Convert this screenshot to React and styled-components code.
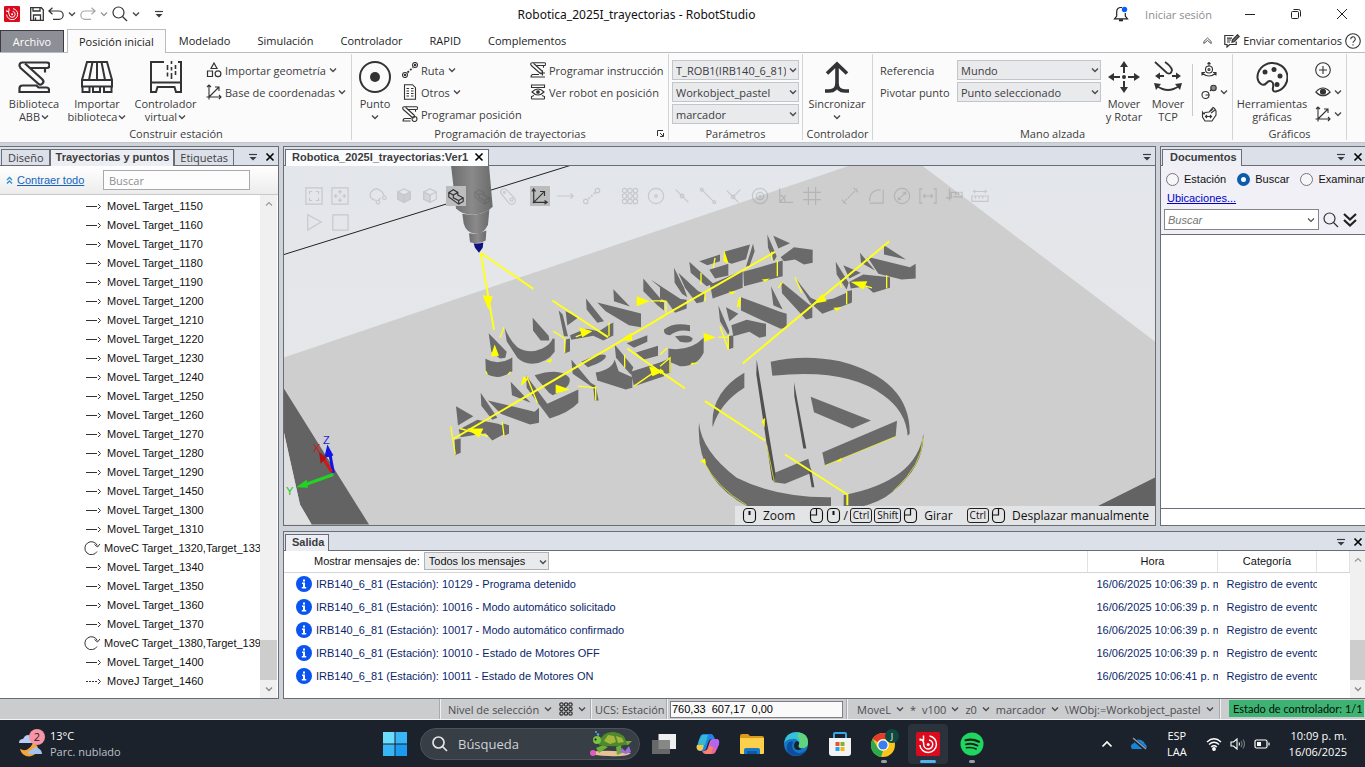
import React from "react";
import styled, { createGlobalStyle, css } from "styled-components";

const Global = createGlobalStyle`
  *, *::before, *::after { box-sizing: border-box; }
  html, body, #root { height: 100%; }
  body { margin: 0; overflow: hidden; font-family: "Open Sans", "Noto Sans", sans-serif; font-size: 11px; color: #3c3c40; background: #ced2d9; }
  button, input, select { font: inherit; color: inherit; margin: 0; }
  button { border: 0; background: none; padding: 0; cursor: default; }
  ul { list-style: none; margin: 0; padding: 0; }
  svg { display: block; flex: none; }
`;

const Shell = styled.div`
  display: flex;
  flex-direction: column;
  height: 100vh;
  min-height: 560px;
`;

/* ---------- icon helpers ---------- */
const Svg = ({ s = 16, w, h, vb, sw = 1.2, c = "#333336", fill = "none", children }) => (
  <svg aria-hidden="true" width={w || s} height={h || s} viewBox={vb || `0 0 ${w || s} ${h || s}`} fill={fill} stroke={c} strokeWidth={sw}>
    {children}
  </svg>
);
const Chevron = ({ c = "#4a4a4e", sw = 1.4 }) => (
  <Svg w={8} h={8} c={c} sw={sw}><path d="M1 2.5 4 5.5 7 2.5" /></Svg>
);
const CloseX = () => <Svg w={10} h={10} c="#000" sw={1.6}><path d="M1.5 1.5l7 7M8.5 1.5l-7 7" /></Svg>;
const DropBar = () => <Svg w={10} h={10} c="#3b3b42" sw={1.2}><path d="M1 2.5h8" /><path d="M1.500 5h7L5 8.500z" fill="#3b3b42" stroke="none" /></Svg>;
const AbbSwirl = ({ s = 16 }) => (
  <svg aria-hidden="true" width={s} height={s} viewBox="0 0 24 24" fill="none" stroke="#fff" strokeWidth="1.5">
    <rect width="24" height="24" rx="2" fill="#db0a1c" stroke="none" />
    <path d="M13.500 4a8.300 8.300 0 1 1-9.600 9" />
    <path d="M13 8a4.500 4.500 0 1 1-5.300 4.500q.3-4.500-4.200-5.500M7.500 3.500v4.500h-4" />
    <circle cx="12.200" cy="12.400" r="1.500" fill="#fff" stroke="none" />
  </svg>
);
const Magnifier = ({ s = 16, c = "#333336", sw = 1.2 }) => (
  <Svg s={s} vb="0 0 16 16" c={c} sw={sw}><circle cx="6.500" cy="6.500" r="5.500" /><path d="M10.500 10.500 15 15" /></Svg>
);

/* ---------- title bar ---------- */
const TitleBar = styled.header`
  display: grid;
  grid-template-columns: 1fr auto 1fr;
  align-items: center;
  flex: none;
  height: 28px;
  background: #fff;
`;
const QuickAccess = styled.div`
  display: flex;
  align-items: center;
  gap: 4px;
  padding-left: 4px;
  button:nth-child(1) { margin-right: 6px; }
  button:last-child { margin-left: 10px; }
`;
const WindowTitle = styled.h1`
  margin: 0;
  padding-right: 92px;
  font: 400 12px "Noto Sans", sans-serif;
  color: #111;
`;
const WindowTools = styled.div`
  display: flex;
  justify-content: flex-end;
  align-items: center;
  height: 27px;
  color: #8c8c90;
`;
const BellBtn = styled.button`margin-right: 16px;`;
const LoginBtn = styled.button`margin-right: 15px;`;
const WinBtn = styled.button`
  width: 46px;
  height: 27px;
  display: grid;
  place-items: center;
`;

function Title() {
  return (
    <TitleBar>
      <QuickAccess>
        <button aria-label="RobotStudio"><AbbSwirl /></button>
        <button aria-label="Guardar"><Svg s={14} sw={1.3}><path d="M.7.7h10.600l2 2v10.600H.7zM3 .7v3.300h7V.7M3.500 13.300V8h7v5.300M5.500 13V10.500" /></Svg></button>
        <button aria-label="Deshacer"><Svg w={16} h={14} sw={1.2}><path d="M4.500.8.9 4l3.600 3.200M1 4h10a4 4 0 0 1 0 8.300H5" /></Svg></button>
        <Chevron />
        <button aria-label="Rehacer"><Svg w={16} h={14} sw={1.2} c="#a6a6aa"><path d="M11.500.8 15.100 4l-3.600 3.200M15 4H5a4 4 0 0 0 0 8.300h6" /></Svg></button>
        <Chevron c="#9a9a9e" />
        <button aria-label="Zoom"><Magnifier /></button>
        <Chevron />
        <button aria-label="Personalizar"><DropBar /></button>
      </QuickAccess>
      <WindowTitle>Robotica_2025I_trayectorias - RobotStudio</WindowTitle>
      <WindowTools>
        <BellBtn aria-label="Notificaciones">
          <Svg s={16} sw={1.2} c="#222"><path d="M8 1.500c-3 0-4.300 2-4.300 4.500v4L1.500 12.800h13L12.300 10V7M8 1.500h1" /><path d="M6 14.300h4" strokeWidth="2" /><circle cx="11.500" cy="3.500" r="2.700" fill="#0b5cff" stroke="none" /></Svg>
        </BellBtn>
        <LoginBtn>Iniciar sesión</LoginBtn>
        <WinBtn aria-label="Minimizar"><Svg s={10} c="#222" sw={1}><path d="M0 5.500h10" /></Svg></WinBtn>
        <WinBtn aria-label="Restaurar"><Svg s={10} c="#222" sw={1}><rect x=".5" y="2.500" width="7" height="7" rx="1" /><path d="M2.500.5h5a2 2 0 0 1 2 2v5" /></Svg></WinBtn>
        <WinBtn aria-label="Cerrar"><Svg s={10} c="#222" sw={1}><path d="M0 0l10 10M10 0 0 10" /></Svg></WinBtn>
      </WindowTools>
    </TitleBar>
  );
}

/* ---------- ribbon tabs ---------- */
const TabStrip = styled.nav`
  display: flex;
  align-items: flex-end;
  flex: none;
  height: 25px;
  background: #fff;
  border-bottom: 1px solid #b9bbc1;
  color: #222;
`;
const FileTab = styled.button`
  width: 64px;
  height: 22px;
  margin-right: 3px;
  border: 1px solid #3c3c40;
  border-bottom: 0;
  background: #8c8f95;
  color: #fff;
`;
const RibbonTab = styled.button`
  height: 23px;
  padding: 0 13px;
  margin-right: 1px;
  ${(p) => p.$active && css`
    height: 24px;
    padding: 0 11px 1px;
    margin: 0 0 -1px;
    background: #fbfbfb;
    border: 1px solid #b9bbc1;
    border-bottom: 0;
  `}
`;
const TabTools = styled.div`
  display: flex;
  align-items: center;
  gap: 12px;
  height: 23px;
  margin-left: auto;
  padding-right: 4px;
  button { display: flex; align-items: center; gap: 3px; }
  button:last-child { margin-left: -9px; }
`;

function Tabs() {
  return (
    <TabStrip>
      <FileTab>Archivo</FileTab>
      <RibbonTab $active>Posición inicial</RibbonTab>
      {["Modelado", "Simulación", "Controlador", "RAPID", "Complementos"].map((t) => <RibbonTab key={t}>{t}</RibbonTab>)}
      <TabTools>
        <button aria-label="Contraer cinta"><Svg w={9} h={8} sw={1} c="#55555a"><path d="M.8 4.500 4.500 1 8.200 4.500v2L4.500 3.500.8 6.500z" /></Svg></button>
        <button>
          <Svg w={16} h={14}><path d="M9.500 1.500H.8v9H3V13l2.700-2.500h6.500V7.500M3 4.200h5M3 6h4M3 8h3" /><path d="M8 8.300 8.300 6 13.500.8l1.700 1.700L10 7.800z" fill="#77777b" /></Svg>
          Enviar comentarios
        </button>
        <button aria-label="Ayuda"><Svg s={16} sw={1.1}><circle cx="8" cy="8" r="7.300" /><path d="M5.700 6.200a2.300 2.300 0 1 1 3.300 2c-.7.4-1 .8-1 1.600M8 11.200v1.300" /></Svg></button>
      </TabTools>
    </TabStrip>
  );
}

/* ---------- ribbon ---------- */
const RibbonBar = styled.section`
  display: flex;
  flex: none;
  height: 90px;
  padding: 1px 0 2px 1px;
  background: #fbfbfb;
  border-bottom: 1px solid #c3c5cb;
`;
const GroupBox = styled.div`
  display: flex;
  flex-direction: column;
  flex: none;
  width: ${(p) => p.$w}px;
  border-right: 1px solid #d3d4d8;
`;
const GroupBody = styled.div`
  display: flex;
  height: 73px;
  padding-top: 5px;
`;
const GroupLabel = styled.div`
  position: relative;
  height: 13px;
  line-height: 13px;
  text-align: center;
`;
const Launcher = styled.button`
  position: absolute;
  right: 4px;
  top: 3px;
`;
const Group = ({ w, label, launcher, children }) => (
  <GroupBox $w={w}>
    <GroupBody>{children}</GroupBody>
    <GroupLabel>
      {label}
      {launcher && <Launcher aria-label="Opciones"><Svg s={7} sw={1}><path d="M.5 6V.5H6M3 3l3 3M6.500 3v3.500H3" /></Svg></Launcher>}
    </GroupLabel>
  </GroupBox>
);
const BigBtn = styled.button`
  display: flex;
  flex-direction: column;
  align-items: center;
  flex: none;
  width: ${(p) => p.$w}px;
  padding-top: 2px;
  line-height: 13px;
  white-space: nowrap;
  > svg { margin-bottom: 4px; }
  span { display: flex; align-items: center; gap: 1px; min-height: 13px; }
`;
const Stack = styled.div`
  display: flex;
  flex-direction: column;
  flex: none;
  width: ${(p) => (p.$w ? p.$w + "px" : "auto")};
  padding-left: ${(p) => p.$pl || 0}px;
`;
const SmallBtn = styled.button`
  display: flex;
  align-items: center;
  gap: 3px;
  height: 22px;
  white-space: nowrap;
`;
const VRule = styled.i`
  width: 1px;
  height: 52px;
  margin: 5px 0 0 3px;
  background: #c9cace;
`;
const SelectWrap = styled.span`
  position: relative;
  display: block;
  flex: none;
  width: ${(p) => p.$w}px;
  height: 20px;
  margin: 1px 0;
  svg { position: absolute; right: 2px; top: 6px; pointer-events: none; }
`;
const Select = styled.select`
  appearance: none;
  width: 100%;
  height: 100%;
  padding: 0 12px 0 3px;
  border: 1px solid #c3c5ca;
  border-radius: 0;
  background: #e9eaec;
`;
const Drop = ({ w, label, value }) => (
  <SelectWrap $w={w}>
    <Select aria-label={label} defaultValue={value}><option>{value}</option></Select>
    <Chevron />
  </SelectWrap>
);
const Field = styled.div`
  display: flex;
  align-items: center;
  height: 22px;
  label { width: 77px; }
`;

const RobotArm = ({ s = 32, extra }) => (
  <Svg s={s} vb="0 0 32 32" sw={2.2}>
    <rect x="1.500" y="1.500" width="30" height="5.500" rx="2.700" />
    <path d="M2 6.500 20 22.500a3 3 0 0 0 4.500-4L7 2.500" fill="#fbfbfb" /><path d="M27 7v4.500" />
    {extra || <path d="M1.500 31v-3.500q0-3 3-3h14l2 2h8q2.500 0 2.500 2.500v2z" />}
  </Svg>
);
const AxesIcon = ({ s = 16 }) => (
  <Svg s={s} vb="0 0 16 16" sw={1.1}><path d="M3 15.500V1M1 3l2-2 2 2M.5 13h14.500M13 11l2 2-2 2M3 13l9.500-9.500M9 3h4v4" /></Svg>
);

function Ribbon() {
  return (
    <RibbonBar>
      <Group w={351} label="Construir estación">
        <BigBtn $w={66}><RobotArm /><span>Biblioteca</span><span>ABB<Chevron /></span></BigBtn>
        <BigBtn $w={60}>
          <Svg s={32} sw={2}><path d="M6 1h20l5 18H1zM11.500 1 8 19M16 1v18M20.500 1 24 19M1 19v6.500h30V19M1.500 25.500V31h7v-5.500M12 25.500V31h7v-5.500M23 25.500V31h7.500v-5.500" /></Svg>
          <span>Importar</span><span>biblioteca<Chevron /></span>
        </BigBtn>
        <BigBtn $w={77}>
          <Svg s={32} sw={2}><path d="M14 1H1v30h5l1.500-5h17L26 31h5V1h-3M1 21.500h30" /><path d="M17.500 4v5M17.500 11.500v4M21.500 0v3M21.500 6v3.500M21.500 12v6M25.500 4v4M25.500 10v4" strokeWidth="1.600" /></Svg>
          <span>Controlador</span><span>virtual<Chevron /></span>
        </BigBtn>
        <Stack $pl={2}>
          <SmallBtn><Svg s={16}><path d="M8 1 11 6.500H5zM1.500 9h5v5.500h-5z" /><circle cx="12" cy="11.700" r="2.900" /></Svg>Importar geometría <Chevron /></SmallBtn>
          <SmallBtn><AxesIcon />Base de coordenadas <Chevron /></SmallBtn>
        </Stack>
      </Group>
      <Group w={317} label="Programación de trayectorias" launcher>
        <BigBtn $w={46}><Svg s={32} sw={2}><circle cx="16" cy="16" r="15" /><circle cx="16" cy="16" r="5" fill="#333336" stroke="none" /></Svg><span>Punto</span><span><Chevron /></span></BigBtn>
        <Stack $w={132} $pl={4}>
          <SmallBtn><Svg s={16} sw={1.1}><circle cx="3" cy="13" r="2.500" /><circle cx="3" cy="13" r=".7" /><circle cx="13" cy="3" r="2.500" /><circle cx="13" cy="3" r=".7" /><path d="M5.500 10.500l5.500-5" strokeDasharray="2 1.500" strokeWidth="1.700" /></Svg>Ruta <Chevron /></SmallBtn>
          <SmallBtn><Svg s={16} sw={1.1}><path d="M2.500.7h8l3 3v11.600h-11zM4.500 4.500h2.500M9 4.500h2.500M4.500 7h2.500M9 7h2.500M4.500 9.500h2.500M9 9.500h2.500M4.500 12h2.500M9 12h2.500" /></Svg>Otros <Chevron /></SmallBtn>
          <SmallBtn><RobotArm s={16} extra={<><path d="M18 25H5q-3 1-3 5h15" /><circle cx="25" cy="26" r="5" /></>} />Programar posición</SmallBtn>
        </Stack>
        <Stack>
          <SmallBtn><RobotArm s={16} extra={<path d="M18 25H5q-3 1-3 5h28M25 17v10M20 22h10" />} />Programar instrucción</SmallBtn>
          <SmallBtn><Svg s={16} sw={1.1}><path d="M1.500 1h13v2.500h-13zM1.500 15v-2.500l2.500-1M14.500 15v-2.500l-2.500-1M1.500 15h13" /><path d="M2 8q6-6 12 0-6 6-12 0z" /><circle cx="8" cy="8" r="1.300" fill="#333336" /></Svg>Ver robot en posición</SmallBtn>
        </Stack>
      </Group>
      <Group w={134} label="Parámetros">
        <Stack $pl={3}>
          <Drop w={127} label="Tarea" value="T_ROB1(IRB140_6_81)" />
          <Drop w={127} label="Objeto de trabajo" value="Workobject_pastel" />
          <Drop w={127} label="Herramienta" value="marcador" />
        </Stack>
      </Group>
      <Group w={70} label="Controlador">
        <BigBtn $w={68}><Svg s={32} sw={3.6}><path d="M16 3v20M6 12.500 16 3 26 12.500M4 30h4q8 0 8-8 0 8 8 8h4" /></Svg><span>Sincronizar</span><span><Chevron /></span></BigBtn>
      </Group>
      <Group w={360} label="Mano alzada">
        <Stack $pl={7}>
          <Field><label htmlFor="ref">Referencia</label><SelectWrap $w={144}><Select id="ref"><option>Mundo</option></Select><Chevron /></SelectWrap></Field>
          <Field><label htmlFor="piv">Pivotar punto</label><SelectWrap $w={144}><Select id="piv"><option>Punto seleccionado</option></Select><Chevron /></SelectWrap></Field>
        </Stack>
        <BigBtn $w={46}>
          <Svg s={32} sw={2}><path d="M16 4v8M16 20v8M4 16h8M20 16h8" /><g fill="#333336" stroke="none"><circle cx="16" cy="16" r="2" /><path d="M16 0l4 6h-8zM16 32l4-6h-8zM0 16l6-4v8zM32 16l-6-4v8z" /></g></Svg>
          <span>Mover</span><span>y Rotar</span>
        </BigBtn>
        <BigBtn $w={42}>
          <Svg s={32} sw={1.8}><path d="M3 1l12 11q4 2 5-3-1-4-7-8M6 15h6M20 15h6M5 25q11 8 22 0" /><g fill="#333336" stroke="none"><path d="M3 15l5-3.500v7zM29 15l-5-3.500v7zM2 22l7 1-5 6zM30 22l-7 1 5 6z" /></g></Svg>
          <span>Mover</span><span>TCP</span>
        </BigBtn>
        <VRule />
        <Stack $pl={8}>
          <SmallBtn aria-label="Giro"><Svg s={16} sw={1.1}><circle cx="8" cy="7.500" r="3.500" /><circle cx="8" cy="7.500" r="1" /><path d="M8 4V.5M6.500 2 8 .5 9.500 2M1 11q7 6 14 0M1 13.500v-3h3M15 13.500v-3h-3" /></Svg></SmallBtn>
          <SmallBtn aria-label="Eje"><Svg s={16} sw={1.1}><circle cx="4.500" cy="11" r="3.500" /><path d="M4.500 11h4M9 7l3-3" /><circle cx="12.500" cy="4" r="2.700" fill="#8a8a8e" /></Svg><Chevron /></SmallBtn>
          <SmallBtn aria-label="Mano"><Svg s={16} sw={1.1}><path d="M1.500 6l1.500 2 1-1.500L8 6l4-4.500 1.500 1L15 5v4l-4 6H4L1.500 11zM8 6l4-3M10 7l4-3M4.500 10.500h6M6 9l-1.500 1.500L6 12M9 9l1.500 1.500L9 12" /></Svg></SmallBtn>
        </Stack>
      </Group>
      <Group w={114} label="Gráficos">
        <BigBtn $w={78}>
          <Svg s={32} sw={2}><path d="M1.500 17A15 14.500 0 1 1 20 30.500q-4 .5-3-4t-1.500-6-5 1.500-5.500 1-3.500-6z" /><g fill="#333336" stroke="none"><circle cx="9" cy="11" r="2.500" /><circle cx="18" cy="8.500" r="2.500" /><circle cx="24" cy="15" r="2.500" /><circle cx="21" cy="23.500" r="2.500" /></g></Svg>
          <span>Herramientas</span><span>gráficas</span>
        </BigBtn>
        <Stack $pl={4}>
          <SmallBtn aria-label="Nueva vista"><Svg s={16} sw={1.1}><circle cx="8" cy="8" r="7.300" /><path d="M8 4v8M4 8h8" /></Svg></SmallBtn>
          <SmallBtn aria-label="Mostrar"><Svg s={16} sw={1.1}><path d="M.8 8Q8 0 15.200 8 8 15.500.8 8z" /><circle cx="8" cy="7.700" r="2.500" fill="#333336" /></Svg><Chevron /></SmallBtn>
          <SmallBtn aria-label="Ejes"><AxesIcon /><Chevron /></SmallBtn>
        </Stack>
      </Group>
    </RibbonBar>
  );
}

/* ---------- docked panels ---------- */
const Workspace = styled.main`
  display: flex;
  flex: 1;
  gap: 4px;
  min-height: 0;
  padding-top: 3px;
`;
const Panel = styled.section`
  display: flex;
  flex-direction: column;
  flex: ${(p) => p.$flex || "none"};
  width: ${(p) => (p.$w ? p.$w + "px" : "auto")};
  min-width: 0;
  min-height: 0;
  border: 1px solid #6a6c76;
  border-left-width: ${(p) => (p.$edge === "left" ? 0 : 1)}px;
  border-right-width: ${(p) => (p.$edge === "right" ? 0 : 1)}px;
  background: #fff;
`;
const PanelHead = styled.div`
  display: flex;
  align-items: flex-end;
  flex: none;
  height: 19px;
  padding-left: 1px;
  background: #dce0e9;
  box-shadow: inset 0 -1px #6a6c76;
`;
const PanelTab = styled.button`
  display: flex;
  align-items: center;
  gap: 6px;
  height: 17px;
  padding: 0 ${(p) => (p.$active ? 4 : 5)}px 1px ${(p) => (p.$lead || 5)}px;
  border: 1px solid #6a6c76;
  white-space: nowrap;
  ${(p) => p.$active && css`
    border-bottom: 0;
    padding-bottom: 2px;
    font: 700 11px "Liberation Sans", sans-serif;
    background: ${p.$bg || "#eceef3"};
  `}
`;
const HeadTools = styled.div`
  display: flex;
  align-items: center;
  gap: 7px;
  height: 18px;
  margin-left: auto;
  padding-right: ${(p) => p.$r || 3}px;
`;
const Scroll = styled.div`
  display: flex;
  flex-direction: column;
  justify-content: space-between;
  align-items: center;
  flex: none;
  width: ${(p) => p.$w || 17}px;
  padding: 5px 0;
  background: #f0f0f0;
`;
const Thumb = styled.i`
  width: 100%;
  height: 40px;
  margin-top: auto;
  margin-bottom: 5px;
  background: #cdcdcd;
`;
const ScrollBar = ({ w }) => (
  <Scroll $w={w}>
    <Svg w={8} h={8} c="#9a9a9a"><path d="M1 5.500 4 2.500 7 5.500" /></Svg>
    <Thumb />
    <Chevron c="#8a8a8a" />
  </Scroll>
);

/* paths tree */
const TreeBar = styled.div`
  display: flex;
  align-items: center;
  flex: none;
  height: 29px;
  padding-left: 6px;
  background: linear-gradient(#fff, #ececec);
  border-bottom: 1px solid #c8c8cc;
  a { flex: none; width: 90px; padding-left: 4px; color: #1565c0; font: 11px "Liberation Sans", sans-serif; }
`;
const SearchBox = styled.input`
  flex: 0 1 147px;
  min-width: 0;
  height: 20px;
  padding: 0 5px;
  border: 1px solid #a9a9ad;
  background: #fdfdfd;
  &::placeholder { color: #8e8e92; }
`;
const TreeWrap = styled.div`
  display: flex;
  flex: 1;
  min-height: 0;
  padding-right: 1px;
`;
const Tree = styled.ul`
  flex: 1;
  min-width: 0;
  padding: 1px 0 0 84px;
  overflow: hidden;
  font-family: "Liberation Sans", sans-serif;
  color: #111;
`;
const TreeRow = styled.li`
  display: flex;
  align-items: center;
  gap: ${(p) => (p.$arc ? 4 : 5)}px;
  height: 19px;
  padding-left: ${(p) => (p.$arc ? 0 : 2)}px;
  white-space: nowrap;
`;
const LineIcon = ({ dash }) => <Svg w={16} h={10} sw={1} c="#333"><path d="M0 5.500h11" strokeDasharray={dash ? "2 1" : undefined} /><path d="M12 3l2.500 2.500L12 8" /></Svg>;
const ArcIcon = () => <Svg w={16} h={15} sw={1} c="#333"><path d="M13 11.500A6.500 6.500 0 1 1 13.300 5.500M10.500 4.500l3 2.500 2.500-3" /></Svg>;

const tree = ["L1150", "L1160", "L1170", "L1180", "L1190", "L1200", "L1210", "L1220", "L1230", "L1240", "L1250", "L1260", "L1270", "L1280", "L1290", "L1450", "L1300", "L1310", "C1320,Target_133", "L1340", "L1350", "L1360", "L1370", "C1380,Target_139", "L1400", "J1460"];

function PathsPanel() {
  return (
    <Panel $w={279} $edge="left">
      <PanelHead>
        <PanelTab $lead={6}>Diseño</PanelTab>
        <PanelTab $active>Trayectorias y puntos</PanelTab>
        <PanelTab>Etiquetas</PanelTab>
        <HeadTools><DropBar /><CloseX /></HeadTools>
      </PanelHead>
      <TreeBar>
        <Svg w={7} h={8} c="#2b8fd0" sw={1.3}><path d="M1 4 3.500 1.500 6 4M1 7.500 3.500 5 6 7.500" /></Svg>
        <a href="#contraer">Contraer todo</a>
        <SearchBox aria-label="Buscar" placeholder="Buscar" />
      </TreeBar>
      <TreeWrap>
        <Tree>
          {tree.map((t) => (
            <TreeRow key={t} $arc={t[0] === "C"}>
              {t[0] === "C" ? <ArcIcon /> : <LineIcon dash={t[0] === "J"} />}
              {`Move${t[0]} Target_${t.slice(1)}`}
            </TreeRow>
          ))}
        </Tree>
        <ScrollBar />
      </TreeWrap>
    </Panel>
  );
}

/* ---------- 3D view ---------- */
const ViewArea = styled.div`
  position: relative;
  flex: 1;
  min-height: 0;
  overflow: hidden;
`;
const SceneSvg = styled.svg`
  width: 100%;
  height: 100%;
`;
const ViewTools = styled.div`
  position: absolute;
  left: 17px;
  top: 17px;
  right: 150px;
  display: flex;
  flex-wrap: wrap;
`;
const ViewBtn = styled.button`
  display: grid;
  place-items: center;
  width: 26px;
  height: 26px;
  margin-left: ${(p) => p.$gap || 0}px;
  svg { width: 20px; height: 20px; padding: 1px; opacity: ${(p) => (p.$on ? 1 : 0.16)}; background: ${(p) => (p.$on ? "#bcbcbc" : "none")}; }
`;
const Hints = styled.div`
  position: absolute;
  right: 0;
  bottom: 0;
  display: flex;
  align-items: center;
  gap: 2px;
  height: 19px;
  padding: 0 6px 0 7px;
  background: #e3e4e6;
  color: #111;
  font-size: 12px;
  span { margin: 0 12px 0 4px; }
  span:last-child { margin-right: 0; }
`;
const Key = styled.kbd`
  height: 15px;
  padding: 0 2px;
  border: 1px solid #222;
  border-radius: 3px;
  font: 10px/13px "Open Sans", sans-serif;
`;
const Mouse = ({ left }) => (
  <Svg w={15} h={17} c="#111" sw={1.1}><rect x="1.500" y="1.500" width="12" height="14" rx="4" /><path d={left ? "M7.500 2v6H2" : "M7.500 4v4"} strokeWidth={left ? 1.2 : 2} /></Svg>
);

const cube = <path d="M10 2l7 3.500v8L10 17l-7-3.500v-8zM3 5.500l7 3.500 7-3.500M10 9v8" />;
const part = <path d="M2 6l5-3 5 3v3l6 3v4l-5 3L2 11zM2 6l5 3 5-3M7 9v3l6 3 5-3M13 15v4" />;
const viewIcons = [
  { n: "Encuadrar", d: <path d="M1 1h18v18H1zM5 8V5h3M12 5h3v3M15 12v3h-3M8 15H5v-3" /> },
  { n: "Centrar", d: <path d="M1 1h18v18H1zM10 4v4M10 12v4M4 10h4M12 10h4M8 6l2-2 2 2M8 14l2 2 2-2M6 8l-2 2 2 2M14 8l2 2-2 2" /> },
  { n: "Selección", g: 12, d: <><path d="M8 15Q-1 13 2 6q6-8 13 0l2 4M13 12l-3 3" /><circle cx="10" cy="17" r="2" /><circle cx="17" cy="12" r="2" /></> },
  { n: "Superficie", d: <><path d="M3 5.500 10 9v8l-7-3.500zM10 9l7-3.500v8L10 17z" fill="#555" />{cube}</> },
  { n: "Cuerpo", d: <><path d="M3 5.500 10 9v8l-7-3.500z" fill="#888" />{cube}</> },
  { n: "Pieza", on: 1, d: part },
  { n: "Grupo", d: <g fill="#777">{part}</g> },
  { n: "Mecanismo", d: <><path d="M3 8a3.500 3.500 0 0 1 5-5l9 9a4 4 0 0 1-6 6z" /><circle cx="14" cy="14" r="1.800" /><circle cx="6" cy="6" r="1" /></> },
  { n: "Ejes", on: 1, g: 6, d: <path d="M3 18V3M1 5l2-3 2 3M2 17h15M15 15l3 2-3 2M3 17 14 6M10 5h5v5" /> },
  { n: "Movimiento", d: <path d="M0 10h18M15 7l3 3-3 3" /> },
  { n: "Trayectoria", d: <><circle cx="3" cy="16" r="2.500" /><circle cx="16" cy="4" r="2.500" /><path d="M6 13l8-7" strokeDasharray="2 2" strokeWidth="2" /></> },
  { n: "Puntos", g: 12, d: <>{[4, 10, 16].map((x) => [4, 10, 16].map((y) => <circle key={x + "-" + y} cx={x} cy={y} r="2.500" />))}</> },
  { n: "Centro", d: <><circle cx="10" cy="10" r="8.500" /><circle cx="10" cy="10" r="1.500" /></> },
  { n: "Medio", d: <><path d="M3 3l14 14" /><circle cx="10" cy="10" r="2" /></> },
  { n: "Extremo", d: <><path d="M3 3l13 13" /><circle cx="3" cy="3" r="1.500" /><circle cx="17" cy="17" r="1.500" /></> },
  { n: "Borde", d: <><path d="M2 4l7 7 8-8M9 11l6 6" /><circle cx="9" cy="11" r="2" /></> },
  { n: "Gravedad", d: <><circle cx="10" cy="10" r="8.500" /><circle cx="10" cy="10" r="4" /><path d="M10 8v4M8 10h4" /></> },
  { n: "Origen", d: <path d="M3 1v16h15M3 17l7-8M3 9q6 1 6 8" /> },
  { n: "Cuadrícula", d: <path d="M6 0v20M14 0v20M0 6h20M0 14h20" /> },
  { n: "Distancia", g: 12, d: <path d="M2 18 18 2M1 14l5 5M14 1l5 5" strokeDasharray="3 1" /> },
  { n: "Ángulo", d: <path d="M3 16Q2 4 15 3M3 18h15V3" /> },
  { n: "Diámetro", d: <><circle cx="10" cy="10" r="8.500" /><path d="M6 14l8-8M11 6h3v3M6 11v3h3" /></> },
  { n: "Mínima", d: <path d="M4 2H1v16h3M16 2h3v16h-3M5 10h10M7 8l-2 2 2 2M13 8l2 2-2 2" /> },
  { n: "Fijar medida", d: <path d="M5 2v13M1 12h6V6h12v5H9M12 6v3M15 6v3" strokeWidth="1.600" /> },
  { n: "Seguir medida", d: <path d="M2 5h16M4 3v4M16 3v4M1 10h18v6H1zM5 10v3M9 10v3M13 10v3" /> },
  { n: "Reproducir", d: <path d="M3 2l15 8-15 9z" /> }, { n: "Detener", d: <path d="M2 2h17v17H2z" /> },
];

function Scene() {
  return (
    <SceneSvg aria-label="Vista 3D de la estación" viewBox="284 166 871 360" preserveAspectRatio="xMidYMid slice">
      <defs>
        <linearGradient id="sky" x1="0" y1="0" x2="0" y2="1"><stop offset="0" stopColor="#e1e5ec" /><stop offset=".5" stopColor="#e6e7e8" /><stop offset="1" stopColor="#e6e6e6" /></linearGradient>
        <linearGradient id="pen" x1="0" x2="1"><stop offset="0" stopColor="#6d6d6d" /><stop offset=".5" stopColor="#8a8a8a" /><stop offset="1" stopColor="#6b6b6b" /></linearGradient>
      </defs>
      <rect x="0" y="0" width="1600" height="900" fill="url(#sky)" />
      <path d="M284 255 570 166" stroke="#222" strokeWidth="1" />
      <path d="M284 358 850 166h72L1155 342V526H284z" fill="#cecece" />
      <path d="M1097 507 1155 478v48h-58z" fill="#636363" />
      {/* left half: table edge, marker pen and first solids, in thirds of a unit */}
      <g transform="translate(284 145) scale(.33333)">
        <path d="M0 733 255 1140H83L48 1080 0 865z" fill="#636363" />
        <path d="M0 865 48 1080 83 1140H0z" fill="#dfe0e1" />
        <g fill="url(#pen)">
          <path d="M501 62h114l11 125q-20 22-60 24-35-2-50-20z" />
          <path d="M535 208q45 10 81-12l-4 45q-15 30-35 26-30 0-38-30z" />
          <path d="M555 266q25 5 52-8l-2 30q-20 12-47 5z" />
        </g>
        <path d="M569 296q15 2 29-2l-2 16-11 15-12-15z" fill="#10107e" />
        <g fill="#6a6a6a">
          <path d="M614 566 668 622 664 640 648 642 622 622zM604 643Q645 666 685 638V680Q645 710 606 688z" />
          <path d="M662 550Q676 585 700 608 735 630 775 612 800 600 806 582L812 583V622Q790 655 745 658 715 656 700 640L668 590zM746 520 794 574 796 588 770 588 747 558z" />
          <path d="M824 498 836 510 852 575 840 575zM845 500 883 519 850 543zM858 572 905 553 945 560 976 540 988 534V573L958 588 928 574 862 586zM846 585 858 582V620L842 627z" />
          <path d="M906 462 960 530 940 535 908 495zM940 474 1071 507V548L1035 542 965 500zM988 434 1038 486 990 470z" />
          <path d="M1078 402 1140 475V498L1120 482 1078 440zM1100 405 1200 470V490z" />
          <path d="M516 785 568 815 522 843zM524 856 580 826 642 838 662 845V868L625 888 605 866 530 878zM512 886 530 882V925L513 932zM655 836 675 842V868L660 874z" />
          <path d="M590 745 640 820 625 826 592 784zM612 768 752 802 765 790V835L738 840 650 808zM680 712 740 775 684 752z" />
          <path d="M726 692 790 778 883 735V775Q855 805 797 822L728 730zM752 692Q830 668 856 700 866 728 806 752L795 745 760 704z" />
          <path d="M862 645 920 715 935 724 944 768 932 768 928 730 866 688zM892 652Q955 620 966 634 966 650 912 668zM935 684Q985 675 992 645L1004 680 1045 698V730L1025 735 940 708z" />
          <path d="M992 600 1048 668 1040 690 996 640zM1028 596 1090 572V592L1050 610zM1056 624 1122 604V634L1080 645zM1040 682 1140 650V695L1050 725z" />
        </g>
        <g stroke="#ffff1e" strokeWidth="6" fill="none">
          <path d="M590 325 630 556M590 325 748 433M805 468 972 578M505 885 1140 514M1030 612 1140 690" />
          <path d="M500 845 514 930M648 580 660 548M975 535V575M842 580V625M728 695 760 775M935 725V768M882 725 935 730M575 865 528 852M612 876 570 862M655 832 660 875M605 680 610 690M672 690 680 682M808 560 842 582M875 577 915 562M1022 630V670M1050 725 1115 680M1100 469H1140" strokeWidth="4" />
        </g>
        <path d="M596 452 626 456 613 496zM632 600 620 636 645 634zM885 548 925 560 895 578zM1058 455 1097 470 1058 485zM1042 565 1008 588 1045 588zM815 720 858 735 815 747zM550 852 598 852 585 880zM718 695 732 705 710 725zM1095 665 1140 680 1105 695zM785 650 805 642 800 655z" fill="#ff0" />
        <g strokeWidth="9"><path d="M148 985 138 930" stroke="#1414e6" /><path d="M143 982 120 945" stroke="#d81414" /><path d="M148 990 65 1020" stroke="#22d322" /></g>
        <path d="M130 900 148 932Q135 942 122 935z" fill="#1414e6" /><path d="M105 922 128 940 110 958z" fill="#b31010" /><path d="M36 1028 68 1006 72 1030z" fill="#22d322" />
      </g>
      {/* right half: remaining solids and the round emblem */}
      <g transform="translate(660 145) scale(.33333)">
        <g fill="#6a6a6a">
          <path d="M0 425 50 462 80 466V492L45 505 22 472 0 462zM42 370 72 430 82 458 66 448 44 415zM55 385 115 440 136 448 130 472 110 476 75 430z" />
          <path d="M88 352 160 418 140 425 92 385zM118 350 180 330V350L142 362zM148 376 205 358V393L165 402zM150 420 248 378V430L158 462z" />
          <path d="M192 322 270 300 258 344 215 358 195 350zM279 298 284 320 268 366 258 366zM250 382 368 348V395L252 425z" />
          <path d="M322 270 350 335 342 350 324 310zM340 274 390 296 355 312zM362 338 402 308 458 316V355L432 360 405 345 372 350z" />
          <path d="M12 555Q40 532 90 542V560Q55 552 30 572 10 572 12 555zM25 612Q90 622 131 580V625Q110 668 60 665L25 650zM45 575Q90 568 98 582 98 598 60 592zM0 655 32 640V685L0 692z" />
          <path d="M175 482 208 560 205 572 180 530zM198 488 235 508 208 530zM214 542 260 526 318 538V575L298 580 268 562 220 575zM204 575 220 572V610L206 614z" />
          <path d="M243 458 360 502 380 508V550L362 553 243 498zM333 425 368 495 340 482z" />
          <path d="M364 412 450 482 457 478V520L438 525 366 446zM404 398 452 460 475 470 520 462 575 438V475L487 508 450 474z" />
          <path d="M527 352 566 415 560 435 530 390zM550 362 602 385 568 402zM568 412 610 390 690 398V430L640 445 618 425 572 432zM560 440 576 437V470L562 475z" />
          <path d="M600 325 645 378 603 355zM622 337 750 368 767 358V402L725 405 655 388zM672 302 738 345 672 330z" />
          <path d="M332 652Q430 628 540 650 752 705 749 868L743 874Q738 800 670 752 560 670 337 694zM253 685V730Q180 775 158 848 150 745 253 685z" />
          <path d="M117 835Q125 920 230 1000 350 1060 513 1058V1090H270Q105 1005 117 835zM551 1052Q770 1010 790 868 795 960 700 1040 660 1075 590 1090H551z" />
          <path d="M452 757 633 828 577 852 462 803zM487 924 711 829 707 876 495 963zM345 985 445 943 455 985 375 1018 343 1013z" />
        </g>
        <path d="M290 645 346 985 344 1015 336 1005 289 690zM402 713 439 912H430L403 755zM446 975 453 972 463 1028H455z" fill="#505050" />
        <g stroke="#ffff1e" strokeWidth="6" fill="none">
          <path d="M0 520 345 322M248 657 688 290M0 680 75 732M135 770 315 888M375 930 562 1050V1082" />
          <path d="M0 630 22 610M0 665 30 640V685M205 570V615M175 578H205M180 545 205 615M232 488 240 458M560 440V480M680 392V432M352 348V395M135 445V470M123 385V420M18 472V508M0 470H20M405 398 425 445M540 415 545 430M636 430 600 420M335 322V345M165 340 160 370M368 412 355 430" strokeWidth="4" />
          <path d="M495 963 707 876M343 1013 320 900M130 950Q170 1030 260 1082M789 880Q788 960 700 1040" strokeWidth="2" />
        </g>
        <path d="M130 565 168 578 133 592zM488 448 460 478 500 470zM572 412 622 410 610 435zM192 315 206 358 190 350zM232 470 243 458 240 495zM0 672 12 680 0 690zM120 950 135 942 138 958zM305 830 315 820 314 850zM528 950 545 940 542 952zM120 655 95 655 90 662zM305 405 330 402 315 412zM205 442 230 440 215 450zM520 490 545 488 530 500z" fill="#ff0" />
      </g>
      <g fontFamily="Liberation Sans, sans-serif" fontSize="11"><text x="323" y="444" fill="#2222dd">Z</text><text x="313" y="452" fill="#d81414">X</text><text x="286" y="495" fill="#22c322">Y</text></g>
    </SceneSvg>
  );
}

function ViewPanel() {
  return (
    <Panel $flex="1">
      <PanelHead>
        <PanelTab $active $lead={6} $bg="#fbfcfe">Robotica_2025I_trayectorias:Ver1 <CloseX /></PanelTab>
        <HeadTools><DropBar /></HeadTools>
      </PanelHead>
      <ViewArea>
        <Scene />
        <ViewTools>
          {viewIcons.map((i) => (
            <ViewBtn key={i.n} aria-label={i.n} $gap={i.g} $on={i.on}><Svg s={20} sw={1.3}>{i.d}</Svg></ViewBtn>
          ))}
        </ViewTools>
        <Hints>
          <Mouse /><span>Zoom</span>
          <Mouse left /><Mouse />/<Key>Ctrl</Key><Key>Shift</Key><Mouse left /><span>Girar</span>
          <Key>Ctrl</Key><Mouse left /><span>Desplazar manualmente</span>
        </Hints>
      </ViewArea>
    </Panel>
  );
}

/* ---------- documents ---------- */
const DocForm = styled.form`
  display: flex;
  flex-direction: column;
  flex: none;
  height: 69px;
  padding: 4px 0 0 3px;
  background: #f0f0f6;
  border-bottom: 1px solid #6a6c76;
  color: #111;
  font: 11px "Liberation Sans", sans-serif;
  a { padding: 4px 3px 3px; color: #0000c8; line-height: 13px; }
`;
const Radios = styled.div`
  display: flex;
  gap: 11px;
  height: 18px;
  padding-left: 2px;
  label { display: flex; align-items: center; gap: 5px; white-space: nowrap; }
`;
const Radio = styled.input.attrs({ type: "radio", name: "origen" })`
  appearance: none;
  width: 13px;
  height: 13px;
  border: 1px solid #77777b;
  border-radius: 50%;
  background: #f6f6f8;
  &:checked { border: 4px solid #0a5cad; background: #fff; }
`;
const DocSearch = styled.div`
  display: flex;
  align-items: center;
  gap: 4px;
  margin-top: 1px;
  span { position: relative; width: 155px; }
  span svg { position: absolute; right: 4px; top: 7px; }
  input { width: 100%; height: 21px; padding: 0 3px; border: 1px solid #85858a; background: #fff; font-style: italic; }
`;
const DocList = styled.div`
  flex: 1;
  margin-bottom: 16px;
  border-bottom: 1px solid #6a6c76;
  background: #fff;
`;

function DocsPanel() {
  return (
    <Panel $w={205} $edge="right">
      <PanelHead>
        <PanelTab $active $lead={7} $bg="#eef0f6">Documentos</PanelTab>
        <HeadTools $r={2}><DropBar /><CloseX /></HeadTools>
      </PanelHead>
      <DocForm>
        <Radios>
          <label><Radio />Estación</label>
          <label><Radio defaultChecked />Buscar</label>
          <label><Radio />Examinar</label>
        </Radios>
        <a href="#ubicaciones">Ubicaciones...</a>
        <DocSearch>
          <span><input aria-label="Buscar documentos" placeholder="Buscar" /><Chevron sw={1.1} /></span>
          <button type="button" aria-label="Buscar"><Magnifier /></button>
          <button type="button" aria-label="Expandir"><Svg s={14} sw={2.2} c="#222"><path d="M1 1l6 5.500L13 1M1 7l6 5.500L13 7" /></Svg></button>
        </DocSearch>
      </DocForm>
      <DocList />
    </Panel>
  );
}

/* ---------- output ---------- */
const OutBody = styled.div`
  display: flex;
  flex: 1;
  min-height: 0;
`;
const OutTable = styled.table`
  flex: 1;
  width: 100%;
  table-layout: fixed;
  border-collapse: collapse;
  align-self: flex-start;
  font: 11px "Liberation Sans", sans-serif;
  color: #0b1f6b;
  th { height: 21px; padding: 0; font-weight: 400; color: #111; border-right: 1px solid #e2e2e4; border-bottom: 1px solid #d5d5d8; }
  td { height: 23px; padding: 0 1px 0 9px; white-space: nowrap; overflow: hidden; }
`;
const Filter = styled.div`
  display: flex;
  align-items: center;
  gap: 4px;
  padding-left: 30px;
  select { font: 11px "Liberation Sans", sans-serif; color: #111; padding-left: 4px; border-color: #b2b2b6; }
  span { height: 18px; margin: 0; }
`;
const Msg = styled.div`
  display: flex;
  align-items: center;
  gap: 4px;
  padding-left: 3px;
`;
const InfoIcon = () => <Svg s={16} c="none"><circle cx="8" cy="8" r="8" fill="#0a54f0" /><path d="M7 3.500h2v2H7zM6 6.500h3v4.500h1.200v1.500H5.800V11H7V8H6z" fill="#fff" /></Svg>;
const logs = [
  ["10129 - Programa detenido", 39], ["10016 - Modo automático solicitado", 39], ["10017 - Modo automático confirmado", 39],
  ["10010 - Estado de Motores OFF", 39], ["10011 - Estado de Motores ON", 41],
];

const OutPanel = styled(Panel)`height: 168px;`;

function Output() {
  return (
    <OutPanel $edge="right">
      <PanelHead>
        <PanelTab $active $lead={6}>Salida</PanelTab>
        <HeadTools $r={2}><DropBar /><CloseX /></HeadTools>
      </PanelHead>
      <OutBody>
        <OutTable>
          <colgroup><col /><col width="130" /><col width="99" /><col width="33" /></colgroup>
          <thead>
            <tr>
              <th><Filter><label htmlFor="msgs">Mostrar mensajes de:</label><SelectWrap $w={125}><Select id="msgs"><option>Todos los mensajes</option></Select><Chevron /></SelectWrap></Filter></th>
              <th>Hora</th><th>Categoría</th><th />
            </tr>
          </thead>
          <tbody>
            {logs.map(([t, s]) => (
              <tr key={t}>
                <td><Msg><InfoIcon />IRB140_6_81 (Estación): {t}</Msg></td>
                <td>16/06/2025 10:06:{s} p. m.</td>
                <td>Registro de eventos</td>
                <td />
              </tr>
            ))}
          </tbody>
        </OutTable>
        <ScrollBar w={15} />
      </OutBody>
    </OutPanel>
  );
}

const RightSide = styled.div`
  display: flex;
  flex-direction: column;
  flex: 1;
  gap: 5px;
  min-width: 0;
`;
const TopRow = styled.div`
  display: flex;
  flex: 1;
  gap: 4px;
  min-height: 0;
`;

/* ---------- status bar ---------- */
const Status = styled.footer`
  display: flex;
  justify-content: flex-end;
  flex: none;
  height: 21px;
  padding-right: 1px;
  background: #cbccce;
  border-bottom: 1px solid #f4f4f6;
  color: #4b4b50;
`;
const Cell = styled.div`
  display: flex;
  align-items: center;
  gap: ${(p) => p.$gap || 4}px;
  width: ${(p) => p.$w}px;
  padding-left: ${(p) => p.$pl || 3}px;
  border-left: 1px solid #f0f0f2;
  box-shadow: -1px 0 #a9aaae;
  white-space: nowrap;
  button { display: flex; align-items: center; gap: 5px; }
`;
const Coords = styled.input`
  width: 173px;
  height: 17px;
  padding: 0 1px;
  border: 1px solid #7f8085;
  background: #fafafa;
  color: #000;
  font: 11px "Liberation Sans", sans-serif;
`;
const Green = styled.output`
  width: 135px;
  height: 17px;
  margin: 1px 0 0 3px;
  padding-left: 4px;
  background: #3cb371;
  color: #0a0a0a;
  font: 11px/17px Lato, sans-serif;
  white-space: nowrap;
`;

function StatusBar() {
  return (
    <Status>
      <Cell $w={151} $pl={7} $gap={7}>
        <button>Nivel de selección <Chevron /></button>
        <button><Svg s={14} sw={1.2}>{[2.5, 7, 11.5].map((x) => [2.5, 7, 11.5].map((y) => <circle key={x * 20 + y} cx={x} cy={y} r="1.700" />))}</Svg><Chevron /></button>
      </Cell>
      <Cell $w={76}>UCS: Estación</Cell>
      <Cell $w={180} $pl={2}><Coords aria-label="Coordenadas" defaultValue="760,33  607,17  0,00" /></Cell>
      <Cell $w={373} $pl={9} $gap={6}>
        <button>MoveL <Chevron /></button><span>*</span><button>v100 <Chevron /></button><button>z0 <Chevron /></button>
        <button>marcador <Chevron /></button><button>\WObj:=Workobject_pastel <Chevron /></button>
      </Cell>
      <Cell $w={6} /><Green>Estado de controlador: 1/1</Green>
    </Status>
  );
}

/* ---------- Windows taskbar ---------- */
const Taskbar = styled.footer`
  display: grid;
  grid-template-columns: 1fr auto 1fr;
  align-items: center;
  flex: none;
  height: 47px;
  background: #1c222b;
  color: #fff;
`;
const Weather = styled.div`
  display: flex;
  align-items: center;
  gap: 5px;
  padding-left: 18px;
  line-height: 16px;
  small { display: block; font-size: 11px; color: #bdc0c5; }
`;
const Apps = styled.div`
  display: flex;
  align-items: center;
  padding-left: 2px;
`;
const AppBtn = styled.button`
  position: relative;
  display: grid;
  place-items: center;
  width: ${(p) => (p.$on ? 40 : 44)}px;
  height: 40px;
  margin: 0 ${(p) => (p.$on ? 2 : 0)}px;
  border-radius: 4px;
  background: ${(p) => (p.$on ? "#2c323b" : "none")};
  &::after {
    content: "";
    display: ${(p) => (p.$run ? "block" : "none")};
    position: absolute;
    bottom: 1px;
    width: ${(p) => (p.$on ? 16 : 6)}px;
    height: 3px;
    border-radius: 2px;
    background: ${(p) => (p.$on ? "#4cb4f2" : "#9a9ea5")};
  }
`;
const SearchPill = styled.button`
  display: flex;
  align-items: center;
  gap: 10px;
  width: 220px;
  height: 32px;
  margin: 0 2px 0 3px;
  padding: 0 6px 0 11px;
  border: 1px solid #4d535b;
  border-radius: 16px;
  background: #383e46;
  color: #d0d2d6;
  font-size: 13px;
  svg:last-child { margin-left: auto; }
`;
const Tray = styled.div`
  display: flex;
  justify-content: flex-end;
  align-items: center;
  gap: 19px;
  padding-right: 18px;
  line-height: 16px;
  text-align: center;
`;
const TrayIcons = styled.div`
  display: flex;
  align-items: center;
  gap: ${(p) => p.$gap}px;
`;
const Clock = styled.time`text-align: right;`;
const Pic = ({ children, s = 24 }) => <svg aria-hidden="true" width={s} height={s} viewBox="0 0 24 24">{children}</svg>;

function WindowsBar() {
  return (
    <Taskbar>
      <Weather>
        <svg aria-hidden="true" width="27" height="30" viewBox="0 0 27 30">
          <path d="M2 20q8 4 13-6 6 2 5 8-5 7-12 5-5-2-6-7z" fill="#f3a43a" />
          <path d="M1 14q0-4 4-4 3-6 8-3 4 3 3 7z" fill="#b7cdf3" /><path d="M10 25q0-4 4-4 2-4 6-2 4 2 4 6z" fill="#a4c2f0" />
          <circle cx="19" cy="8" r="8" fill="#f794a6" /><text x="19" y="12" textAnchor="middle" fontSize="11" fontFamily="Open Sans, sans-serif" fill="#222">2</text>
        </svg>
        <div>13°C<small>Parc. nublado</small></div>
      </Weather>
      <Apps>
        <AppBtn aria-label="Inicio"><Pic><path d="M0 0h11.500v11.500H0z" fill="#6bdcfb" /><path d="M12.500 0H24v11.500H12.500zM0 12.500h11.500V24H0z" fill="#37b5f5" /><path d="M12.500 12.500H24V24H12.500z" fill="#1b9af0" /></Pic></AppBtn>
        <SearchPill>
          <Magnifier c="#e3e4e6" sw={1.7} />Búsqueda
          <svg aria-hidden="true" width="44" height="27" viewBox="0 0 44 27">
            <path d="M1 22q20-3 41 1-4 4-22 3Q4 26 1 22z" fill="#e8c196" />
            <path d="M14 15 7 18l3 5 9-6zM27 17l1 8 5-2-1-8zM36 11l7 0-4 4-5-1z" fill="#6cae3a" />
            <path d="M10 12Q14 1 25 2t13 12Q28 18 10 15z" fill="#4d8a2d" /><path d="M15 11l4-6 6 1 2 6-6 2zM27 6l6 2 2 4-6 1z" fill="#a4b63c" />
            <circle cx="8" cy="10" r="4" fill="#7cc044" /><circle cx="6.500" cy="9.500" r="1" fill="#111" />
            <circle cx="4" cy="23" r="3" fill="#e05ac0" /><path d="M31 22l2-4 3 3 4-5 2 6-5 2z" fill="#9a6fd6" />
            <circle cx="7" cy="2" r="1" fill="#47b4ef" /><circle cx="9" cy="4.500" r="1.200" fill="#47b4ef" />
          </svg>
        </SearchPill>
        <AppBtn aria-label="Vista de tareas"><Pic><path d="M6.500 2H24v15H6.500z" fill="#efefef" /><path d="M0 8h18v14H0z" fill="#747474" opacity=".85" /></Pic></AppBtn>
        <AppBtn aria-label="Copilot"><Pic>
          <path d="M8 2h7q2 0 3 3l1 2h-3q-3 0-4 4l-2 6q-1 2-3 2H4Q0 19 1 14L4 5q1-3 4-3z" fill="#1c86e8" /><path d="M4 13l3-3q2 6-2 9Q-1 18 1 13z" fill="#f4ca45" /><path d="M3 8l3-5h6l-3 10H2z" fill="#37b6d6" />
          <path d="M16 22H9q-2 0-3-3h2q3 0 4-4l2-6q1-2 3-2h3q4 0 3 5l-3 7q-1 3-4 3z" fill="#e863a8" /><path d="M16 7h4q4 0 3 5l-2 5-7-4z" fill="#b265ee" /><path d="M8 19q4 0 5-5l4 1-2 7H9z" fill="#f5846a" />
        </Pic></AppBtn>
        <AppBtn aria-label="Explorador"><Pic><path d="M0 4q0-2 2-2h6l2 2h12q2 0 2 2v4H0z" fill="#dd9a18" /><path d="M0 6h24v15q0 1-1 1H1q-1 0-1-1z" fill="#fcd04b" /><path d="M4 22v-4q0-2 2-2h12q2 0 2 2v4z" fill="#1a78c8" /><path d="M7 19h10v3H7z" fill="#0d5a9e" /></Pic></AppBtn>
        <AppBtn aria-label="Edge"><Pic><circle cx="12" cy="12" r="12" fill="#1677c7" /><path d="M0 11Q2 0 13 0q11 1 11 10 0 6-6 6-5 0-3-4-1-6-7-5-5 0-8 4z" fill="#35c1d8" /><path d="M15 .5Q24 2 24 10q0 6-6 6-5 0-3-4 2-5-2-8z" fill="#60d57b" /><path d="M9 10q-3 8 5 11 4 1 8-3-5 8-14 5Q0 20 4 11q3-3 5-1z" fill="#0e4c9e" /><path d="M13 9q3 1 2 3-2 4 3 5-7 3-8-3 0-4 3-5z" fill="#1c222b" /></Pic></AppBtn>
        <AppBtn aria-label="Store"><Pic><path d="M6 7V2q0-1 1-1h10q1 0 1 1v5" fill="none" stroke="#37a7e8" strokeWidth="2" /><path d="M1 6h22v15q0 3-3 3H4q-3 0-3-3z" fill="#f3f3f4" /><path d="M7.500 10h4v4h-4z" fill="#e8502f" /><path d="M12.500 10h4v4h-4z" fill="#7cb529" /><path d="M7.500 15h4v4h-4z" fill="#22a2e8" /><path d="M12.500 15h4v4h-4z" fill="#f7b416" /></Pic></AppBtn>
        <AppBtn aria-label="Chrome" $run>
          <svg aria-hidden="true" width="30" height="30" viewBox="0 0 30 30">
            <circle cx="14" cy="16" r="12" fill="#f9c51d" /><path d="M3.600 10A12 12 0 0 1 24.400 10H14q-4 0-5.200 3z" fill="#e33b2e" /><path d="M3.600 10 8.800 19q2 3 5.200 3l-2 6A12 12 0 0 1 3.600 10z" fill="#2da94f" />
            <circle cx="14" cy="16" r="5.800" fill="#fff" /><circle cx="14" cy="16" r="4.600" fill="#3b7ded" /><circle cx="23" cy="7" r="7" fill="#0c4a3f" />
            <text x="23" y="11" textAnchor="middle" fontSize="9" fontFamily="Open Sans, sans-serif" fill="#fff">J</text>
          </svg>
        </AppBtn>
        <AppBtn aria-label="RobotStudio" $run $on><AbbSwirl s={24} /></AppBtn>
        <AppBtn aria-label="Spotify" $run><Pic><circle cx="12" cy="12" r="11.500" fill="#1ed760" /><g fill="none" stroke="#15241b" strokeLinecap="round"><path d="M5.500 8.300q7-2 13.500 1.500" strokeWidth="2.200" /><path d="M6 12.300q6-1.500 11.500 1.300" strokeWidth="1.900" /><path d="M6.500 15.800q5-1 9.700 1.200" strokeWidth="1.600" /></g></Pic></AppBtn>
      </Apps>
      <Tray>
        <TrayIcons $gap={17}>
          <Svg w={12} h={8} c="#fff" sw={1.7}><path d="M1.500 6.500 6 2l4.500 4.500" /></Svg>
          <Svg w={18} h={14} c="none"><path d="M2 12Q-1 8 4 6q2-5 7-3 3 1 4 4 3 2 1 5z" fill="#1685d8" /><path d="M2 1l14 12" stroke="#1c222b" strokeWidth="3" /><path d="M3 1l13 11" stroke="#9a9fa8" /></Svg>
        </TrayIcons>
        <div>ESP<br />LAA</div>
        <TrayIcons $gap={8}>
          <Svg s={16} c="#fff" sw={1.4}><path d="M1 6q7-6.500 14 0M3 8.500q5-4.500 10 0M5.200 11q2.800-2.500 5.600 0" /><circle cx="8" cy="13" r="1.200" fill="#fff" /></Svg>
          <Svg s={16} c="#fff" sw={1.1}><path d="M1 6h2.500L7 3v10l-3.500-3H1z" /><path d="M9 6.500q1 1.500 0 3" /><g stroke="#777c84"><path d="M11 5q2 3 0 6M13 3.500q3 4.500 0 9" /></g></Svg>
          <Svg s={16} c="#fff" sw={1.2}><rect x="1" y="4" width="12" height="8" rx="1.500" /><path d="M15 6.500v3" /><path d="M3 6h4v4H3z" fill="#fff" stroke="none" /></Svg>
        </TrayIcons>
        <Clock>10:09 p. m.<br />16/06/2025</Clock>
      </Tray>
    </Taskbar>
  );
}

export default function App() {
  return (
    <>
      <Global />
      <Shell>
        <Title />
        <Tabs />
        <Ribbon />
        <Workspace>
          <PathsPanel />
          <RightSide>
            <TopRow><ViewPanel /><DocsPanel /></TopRow>
            <Output />
          </RightSide>
        </Workspace>
        <StatusBar />
        <WindowsBar />
      </Shell>
    </>
  );
}
